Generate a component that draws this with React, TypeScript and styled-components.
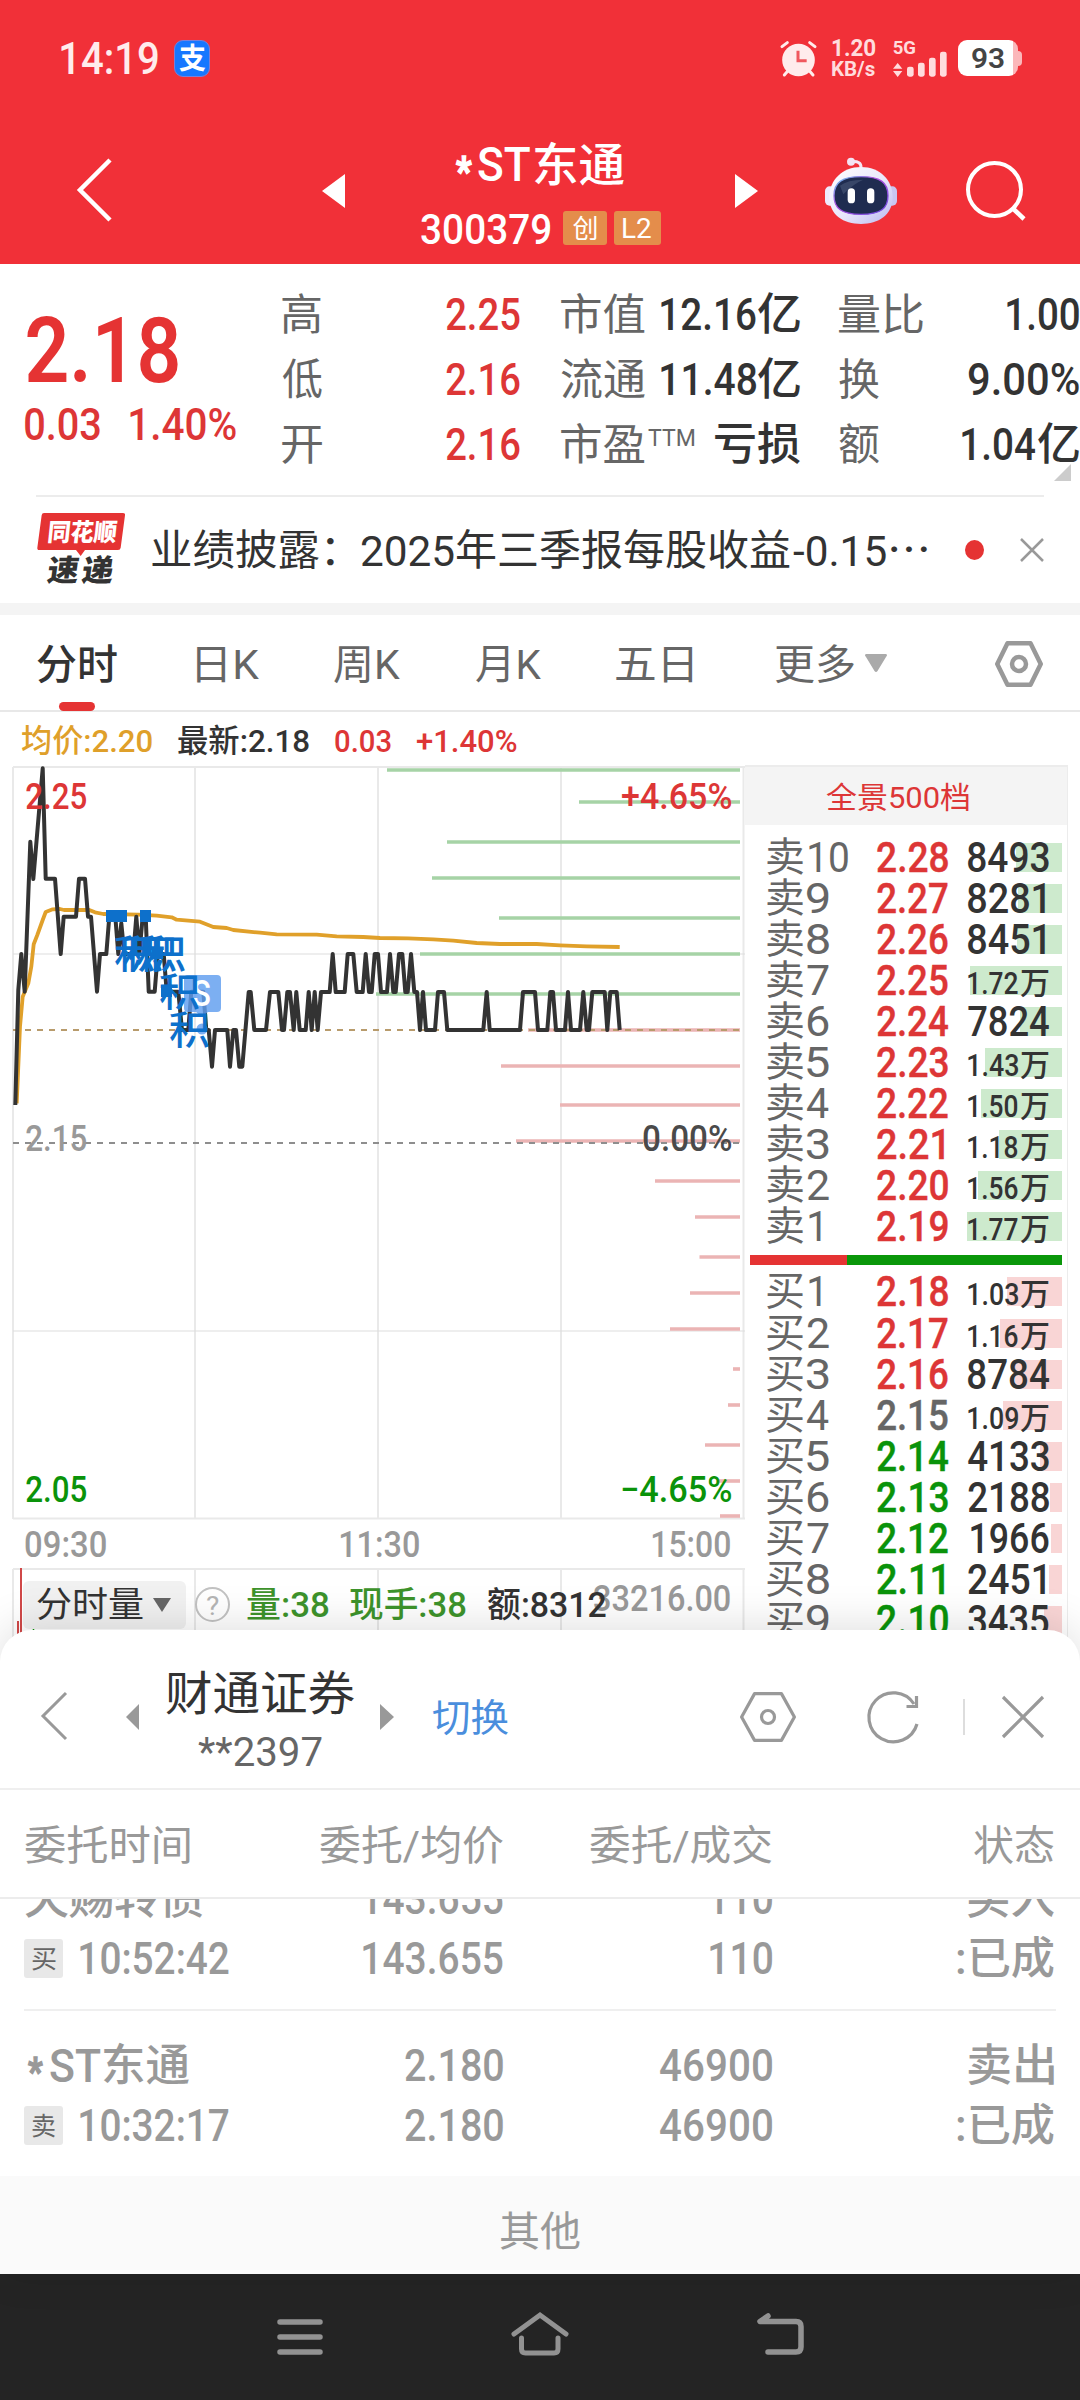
import React, { useLayoutEffect, useRef, useState } from 'react';
import styled, { createGlobalStyle } from 'styled-components';

const FONT = 'Roboto, "Noto Sans CJK SC", sans-serif';
const RED = '#dd3636';
const GREEN = '#0a930a';
const INK = '#333333';
const GREY = '#999999';

const Global = createGlobalStyle`
  body { margin: 0; background: #fff; font-family: ${FONT}; }
  * { box-sizing: border-box; }
`;

/* ---------- text fitted to an exact ink width ---------- */
const FitBox = styled.span<{ $w: number; $h: number; $ml: number }>`
  display: block;
  flex: none;
  width: ${p => p.$w}px;
  height: ${p => p.$h}px;
  margin-left: ${p => p.$ml}px;
  white-space: pre;
`;
const FitInner = styled.span<{ $s: number; $h: number; $c: string; $wt: number; $st: number }>`
  display: inline-block;
  transform-origin: 0 50%;
  font-size: ${p => p.$s}px;
  line-height: ${p => p.$h}px;
  font-weight: ${p => p.$wt};
  color: ${p => p.$c};
  -webkit-text-stroke: ${p => p.$st}px ${p => p.$c};
`;
interface TProps { w: number; s: number; h?: number; c?: string; wt?: number; ml?: number; dy?: number; stroke?: number; children: string }
function T({ w, s, h = 60, c = INK, wt = 400, ml = 0, dy = 1, stroke = 0, children }: TProps) {
  const ref = useRef<HTMLSpanElement>(null);
  const [tf, setTf] = useState('none');
  useLayoutEffect(() => {
    const ctx = document.createElement('canvas').getContext('2d');
    if (!ctx) return;
    ctx.font = `${wt} ${s}px ${FONT}`;
    const m = ctx.measureText(children);
    const ink = m.actualBoundingBoxLeft + m.actualBoundingBoxRight;
    const k = w / ink;
    setTf(`translate(${m.actualBoundingBoxLeft * k}px, ${dy}px) scaleX(${k})`);
  }, [children, w, s, wt, dy]);
  return (
    <FitBox $w={w} $h={h} $ml={ml}>
      <FitInner ref={ref} $s={s} $h={h} $c={c} $wt={wt} $st={stroke} style={{ transform: tf }}>{children}</FitInner>
    </FitBox>
  );
}

const Screen = styled.div`width: 1080px; height: 2400px; overflow: hidden; background: #fff; display: flex; flex-direction: column;`;
const Row = styled.div<{ $h?: number; $pl?: number }>`
  display: flex; align-items: center; flex: none;
  height: ${p => (p.$h ? p.$h + 'px' : 'auto')};
  padding-left: ${p => p.$pl ?? 0}px;
`;
const Icon = styled.svg<{ $ml?: number }>`display: block; flex: none; margin-left: ${p => p.$ml ?? 0}px; overflow: visible;`;
const Overlay = styled.div<{ $x: number; $y: number }>`position: absolute; left: ${p => p.$x}px; top: ${p => p.$y}px; display: flex;`;

/* ---------- header ---------- */
const Header = styled.header`flex: none; height: 264px; background: #f13038;`;
const StatusBar = styled(Row)`height: 116px; padding-left: 61px;`;
const PayIcon = styled.div`
  flex: none; width: 36px; height: 37px; margin-left: 16px; border-radius: 9px; background: #1677ff;
  border: 1px solid #7a80d8; display: flex; align-items: center; justify-content: center;
`;
const SpeedCol = styled.div`margin-left: 15px; width: 46px; flex: none;`;
const Battery = styled.div`
  flex: none; margin-left: 10px; width: 60px; height: 36px; border-radius: 9px; display: flex; justify-content: center;
  background: linear-gradient(90deg, #fff 91%, #fbb7ba 91%);
`;
const Nub = styled.div`width: 4px; height: 15px; border-radius: 0 4px 4px 0; background: #fbb7ba;`;
const NavBar = styled(Row)`height: 148px; padding-left: 76px;`;
const TitleBlock = styled.div`
  width: 390px; height: 128px; margin-top: 19px; display: flex; flex-direction: column; align-items: center; align-self: flex-start;
`;
const Tag = styled.div<{ $w: number; $ml: number }>`
  width: ${p => p.$w}px; height: 34px; margin-left: ${p => p.$ml}px; border-radius: 3px; background: #e48d4b;
  display: flex; justify-content: center;
`;

function Robot() {
  return (
    <Icon $ml={67} width="72" height="69" viewBox="195 373 216 207">
      <defs>
        <linearGradient id="shell" x1="0" y1="0" x2="1" y2="1">
          <stop offset="0" stopColor="#ffffff" /><stop offset=".55" stopColor="#e9e6fb" /><stop offset="1" stopColor="#b9b8ef" />
        </linearGradient>
        <linearGradient id="rim" x1="0" y1="0" x2="1" y2="1">
          <stop offset="0" stopColor="#5fc4e8" /><stop offset=".4" stopColor="#b050e0" /><stop offset="1" stopColor="#6a4be0" />
        </linearGradient>
      </defs>
      <path d="M303 408 Q304 388 276 390" fill="none" stroke="#f5e6f4" strokeWidth="9" />
      <circle cx="273" cy="390" r="12" fill="#f3e3f3" />
      <rect x="195" y="464" width="30" height="58" rx="14" fill="#eeeafc" />
      <rect x="381" y="464" width="30" height="58" rx="14" fill="#c9c6f2" />
      <path d="M303 406 C360 406 398 445 398 497 C398 550 355 577 303 577 C250 577 208 550 208 497 C208 445 247 406 303 406Z" fill="url(#shell)" />
      <path d="M303 435 C360 435 384 452 384 492 C384 530 362 548 303 548 C245 548 222 530 222 492 C222 452 247 435 303 435Z" fill="#1f2c50" stroke="url(#rim)" strokeWidth="4" />
      <path d="M240 462 Q262 444 310 444 Q280 456 250 488Z" fill="#4a5878" opacity=".6" />
      <rect x="263" y="470" width="22" height="45" rx="11" fill="#fff" />
      <rect x="321" y="470" width="22" height="45" rx="11" fill="#fff" />
    </Icon>
  );
}

function TopHeader() {
  return (
    <Header>
      <StatusBar>
        <T w={97} s={44} wt={500} c="#ffecec" dy={0.5}>14:19</T>
        <PayIcon><T w={27} s={29} h={34} wt={700} c="#fff">支</T></PayIcon>
        <Icon $ml={570} width="37" height="37" viewBox="60 28 111 111">
          <g stroke="#ffecec" strokeWidth="9" strokeLinecap="round">
            <path d="M66 48 82 36M165 48 149 36M84 120 73 133M148 120 159 133" />
          </g>
          <circle cx="115.500" cy="88" r="49" fill="#ffecec" />
          <path d="M114 60V90H140" fill="none" stroke="#f0585e" strokeWidth="9" />
        </Icon>
        <SpeedCol>
          <T w={44} s={23} h={21} wt={700} c="#ffdcdd">1.20</T>
          <T w={43} s={20} h={21} wt={700} c="#ffdcdd">KB/s</T>
        </SpeedCol>
        <Icon $ml={14} width="56" height="37" viewBox="396 28 168 111">
          <path d="M399 114 413 97 427 114ZM399 121 413 139 427 121Z" fill="#ffdcdd" />
          <rect x="441" y="108" width="20" height="30" rx="7" fill="#ffdcdd" />
          <rect x="474" y="96" width="20" height="42" rx="7" fill="#ffdcdd" />
          <rect x="507" y="81" width="20" height="57" rx="7" fill="#ffdcdd" />
          <rect x="540" y="63" width="20" height="75" rx="7" fill="#ffdcdd" />
          <text x="398" y="71" fontSize="54" fontWeight="700" fill="#ffdcdd" textLength="70" lengthAdjust="spacingAndGlyphs" fontFamily={FONT}>5G</text>
        </Icon>
        <Battery><T w={32} s={28} h={36} wt={600} c="#444">93</T></Battery>
        <Nub />
      </StatusBar>
      <NavBar>
        <Icon width="36" height="64" viewBox="0 0 36 64"><path d="M34 2 4 32 34 62" fill="none" stroke="#fff" strokeWidth="4.500" /></Icon>
        <Icon $ml={210} width="23" height="34" viewBox="0 -1 23 34"><path d="M23 0V34L0 17Z" fill="#fff" /></Icon>
        <TitleBlock>
          <Row>
            <T w={16} s={40} wt={800} c="#fff" dy={7} stroke={1.6}>*</T>
            <T w={52} s={49} wt={500} c="#fff" ml={6} dy={0}>ST</T>
            <T w={90} s={46} wt={500} c="#fff" ml={4} dy={0}>东通</T>
          </Row>
          <Row $h={66}>
            <T w={129} s={43} wt={500} c="#fff" ml={1}>300379</T>
            <Tag $w={44} $ml={13}><T w={24} s={26} h={34} c="#fff">创</T></Tag>
            <Tag $w={47} $ml={7}><T w={28} s={28} h={34} c="#fff">L2</T></Tag>
          </Row>
        </TitleBlock>
        <Icon width="23" height="34" viewBox="0 -1 23 34"><path d="M0 0V34L23 17Z" fill="#fff" /></Icon>
        <Robot />
        <Icon $ml={69} width="60" height="62" viewBox="0 0 60 62">
          <circle cx="28.500" cy="30.500" r="26.500" fill="none" stroke="#fff" strokeWidth="4" />
          <path d="M47.500 50 58 60" stroke="#fff" strokeWidth="4.500" />
        </Icon>
      </NavBar>
    </Header>
  );
}

/* ---------- quote ---------- */
const Quote = styled.section`position: relative; flex: none; height: 231px; display: flex;`;
const PriceBlock = styled.div`width: 282px; padding: 48px 0 0 25px;`;
const StatCol = styled.div<{ $w: number; $ml: number }>`
  flex: none; width: ${p => p.$w}px; margin-left: ${p => p.$ml}px; padding-top: 18px;
`;
const StatRow = styled.div`height: 65px; display: flex; justify-content: space-between;`;
const Pair = styled.div`display: flex;`;
const Fold = styled.div`
  position: absolute; right: 9px; top: 200px; border-left: 17px solid transparent; border-bottom: 17px solid #ccc;
`;
const LBL = '#666';

function QuotePanel() {
  return (
    <Quote>
      <PriceBlock>
        <T w={151} s={91} h={76} wt={600} c="#e53333" ml={2}>2.18</T>
        <Row $h={72}>
          <T w={75} s={44} h={72} wt={500} c={RED}>0.03</T>
          <T w={106} s={44} h={72} wt={500} c={RED} ml={30}>1.40%</T>
        </Row>
      </PriceBlock>
      <StatCol $w={238} $ml={0}>
        <StatRow><T w={39} s={43} h={65} c={LBL}>高</T><T w={74} s={44} h={65} wt={500} c={RED}>2.25</T></StatRow>
        <StatRow><T w={40} s={43} h={65} c={LBL}>低</T><T w={74} s={44} h={65} wt={500} c={RED}>2.16</T></StatRow>
        <StatRow><T w={40} s={43} h={65} c={LBL}>开</T><T w={74} s={44} h={65} wt={500} c={RED}>2.16</T></StatRow>
      </StatCol>
      <StatCol $w={239} $ml={41}>
        <StatRow><T w={84} s={43} h={65} c={LBL}>市值</T><Pair><T w={95} s={44} h={65} wt={500}>12.16</T><T w={42} s={44} h={65} wt={500} ml={2}>亿</T></Pair></StatRow>
        <StatRow><T w={84} s={43} h={65} c={LBL}>流通</T><Pair><T w={95} s={44} h={65} wt={500}>11.48</T><T w={42} s={44} h={65} wt={500} ml={2}>亿</T></Pair></StatRow>
        <StatRow>
          <Pair><T w={84} s={43} h={65} c={LBL}>市盈</T><T w={46} s={24} h={65} c={LBL} ml={3} dy={-6}>TTM</T></Pair>
          <T w={85} s={44} h={65} wt={500}>亏损</T>
        </StatRow>
      </StatCol>
      <StatCol $w={240} $ml={39}>
        <StatRow><T w={84} s={43} h={65} c={LBL}>量比</T><T w={72} s={44} h={65} wt={500}>1.00</T></StatRow>
        <StatRow><T w={40} s={43} h={65} c={LBL}>换</T><T w={110} s={44} h={65} wt={500}>9.00%</T></StatRow>
        <StatRow><T w={40} s={43} h={65} c={LBL}>额</T><Pair><T w={73} s={44} h={65} wt={500}>1.04</T><T w={41} s={44} h={65} wt={500} ml={3}>亿</T></Pair></StatRow>
      </StatCol>
      <Fold />
    </Quote>
  );
}

/* ---------- news strip ---------- */
const News = styled.section`flex: none; height: 108px; margin: 0 36px; border-top: 2px solid #ececec; display: flex; align-items: center;`;
const Dot = styled.i`flex: none; width: 19px; height: 20px; border-radius: 50%; background: #e53333; margin-left: 38px;`;
const Band = styled.div`flex: none; height: 12px; background: #f4f4f4;`;

function NewsStrip() {
  return (
    <News>
      <Icon $ml={1} width="88" height="72" viewBox="51 42 264 216">
        <path d="M72 39H309Q316 39 315 46L302 143Q301 150 294 150H195L182 168 168 150H58Q51 150 52 143L65 46Q66 39 72 39Z" fill="#e53333" />
        <g fontFamily={FONT} fontWeight="900">
          <text transform="translate(80 123) skewX(-6)" fontSize="74" fill="#fff" textLength="208" lengthAdjust="spacingAndGlyphs">同花顺</text>
          <text transform="translate(79 244) skewX(-8)" fontSize="90" fill="#333" textLength="94" lengthAdjust="spacingAndGlyphs">速</text>
          <text transform="translate(182 244) skewX(-8)" fontSize="90" fill="#333" textLength="94" lengthAdjust="spacingAndGlyphs">递</text>
        </g>
      </Icon>
      <T w={182} s={42} ml={27}>业绩披露：</T>
      <T w={93} s={43} ml={27}>2025</T>
      <T w={333} s={42} ml={3}>年三季报每股收益</T>
      <T w={93} s={43} ml={3}>-0.15</T>
      <T w={36} s={42} ml={5}>⋯</T>
      <Dot />
      <Icon $ml={36} width="24" height="24" viewBox="0 0 24 24"><path d="M1 1 23 23M23 1 1 23" stroke="#999" strokeWidth="2.500" /></Icon>
    </News>
  );
}

/* ---------- tabs ---------- */
const Tabs = styled.nav`
  flex: none; height: 97px; border-bottom: 2px solid #e8e8e8; display: flex; align-items: center; padding: 3px 0 0 37px;
`;
const ActiveTab = styled.div`
  align-self: stretch; display: flex; flex-direction: column; align-items: center; justify-content: space-between; padding-top: 16px; width: 80px;
`;
const Underline = styled.i`width: 36px; height: 9px; border-radius: 5px; background: #e53333; margin-bottom: -1px;`;

function Hex({ ml, w, h, sw, r }: { ml: number; w: number; h: number; sw: number; r: number }) {
  const a = sw / 2;
  return (
    <Icon $ml={ml} width={w} height={h} viewBox={`0 0 ${w} ${h}`}>
      <path d={`M${a} ${h / 2} ${w * 0.26} ${a}H${w * 0.74}L${w - a} ${h / 2} ${w * 0.74} ${h - a}H${w * 0.26}Z`} fill="none" stroke="#999" strokeWidth={sw} strokeLinejoin="round" />
      <circle cx={w / 2} cy={h / 2} r={r} fill="none" stroke="#999" strokeWidth={sw} />
    </Icon>
  );
}

function TabBar() {
  return (
    <Tabs>
      <ActiveTab><T w={80} s={41} h={60} wt={500}>分时</T><Underline /></ActiveTab>
      <T w={62} s={41} c={LBL} ml={80}>日K</T>
      <T w={66} s={41} c={LBL} ml={75}>周K</T>
      <T w={65} s={41} c={LBL} ml={76}>月K</T>
      <T w={77} s={41} c={LBL} ml={75}>五日</T>
      <T w={79} s={41} c={LBL} ml={82}>更多</T>
      <Icon $ml={11} width="22" height="18" viewBox="0 1 22 18"><path d="M1 0H21Q23 1 21 3L12.500 17Q11 19 9.500 17L1 3Q-1 1 1 0Z" fill="#aaa" /></Icon>
      <Hex ml={108} w={48} h={46} sw={4.5} r={7} />
    </Tabs>
  );
}

/* ---------- chart ---------- */
const Info = styled(Row)`height: 53px; padding-left: 22px;`;
const Main = styled.section`flex: none; height: 895px; display: flex; overflow: hidden;`;
const ChartCol = styled.div`width: 745px; flex: none;`;
const PriceChart = styled.div`position: relative; height: 754px;`;
const TimeAxis = styled.div`height: 49px; display: flex; justify-content: space-between; padding: 0 15px 0 25px;`;
const VolumeChart = styled.div`position: relative; height: 92px;`;
const VolumeInfo = styled(Row)`position: relative; height: 73px; padding-left: 23px;`;
const Picker = styled.div`flex: none; width: 163px; height: 48px; border-radius: 6px; background: #f1f1f1; display: flex; align-items: center; padding-left: 14px;`;
const Help = styled.div`
  flex: none; width: 35px; height: 35px; margin-left: 9px; border: 2px solid #c2c2c2; border-radius: 50%; display: flex; justify-content: center;
`;

const PRICE_A: number[][] = [[46,1065],[55,720],[64,612],[74,725],[91,275],[100,387],[128,55],[137,386],[165,386],[182,612],[191,500],[228,500],[237,386],[255,386],[264,500],[273,500],[291,725],[300,612],[319,612],[328,500],[346,500],[355,612],[364,520],[373,612],[400,612],[409,500],[418,612],[428,500],[437,500],[446,725],[464,725],[473,612],[491,612],[500,725],[535,725],[546,840],[565,840],[574,725],[610,725],[619,840],[626,840],[636,950],[645,840],[682,840],[690,950],[700,840],[708,840],[718,950],[727,950],[746,726],[752,726],[763,840],[798,840],[810,726],[835,726],[846,840],[852,840],[862,726],[870,726],[881,840],[889,726],[899,840],[917,840],[926,726],[935,840],[944,726],[953,840],[963,726],[989,726],[998,612],[1007,726],[1034,726],[1043,612],[1060,612],[1070,726],[1088,726],[1097,612],[1107,726],[1115,726]];
const PRICE_B: number[][] = [[14,612],[24,612],[33,726],[51,726],[60,612],[70,726],[77,726],[87,612],[97,612],[106,726],[113,726],[123,612],[133,726],[141,726],[150,840],[159,726],[168,840],[195,840],[204,726],[222,726],[232,840],[340,840],[350,726],[359,840],[450,840],[459,726],[495,726],[504,840],[532,840],[541,726],[549,726],[558,840],[585,840],[594,726],[603,840],[630,840],[640,726],[650,840],[657,840],[667,726],[704,726],[712,840],[721,726],[740,726],[749,840]];
const AVG_A: number[][] = [[50,1060],[60,830],[68,740],[85,700],[94,650],[101,583],[112,555],[128,510],[137,486],[158,478],[180,477],[192,480],[268,480],[285,487],[310,492],[415,494],[470,497],[515,502],[530,509],[600,515],[640,531],[680,534],[700,540],[780,548],[830,553],[950,554],[1010,559],[1090,561],[1140,564]];
const AVG_B: number[][] = [[115,565],[190,568],[250,572],[320,579],[390,582],[500,582],[570,586],[650,589],[749,591]];
const toPoints = (a: number[][], b: number[][]) =>
  [...a.map(([x, y]) => [x / 3, y / 3 - 15]), ...b.map(([x, y]) => [x / 3 + 370, y / 3 - 15])]
    .map(([x, y]) => `${x.toFixed(1)},${y.toFixed(1)}`).join(' ');

const ASK_DEPTH = [[387, 770], [579, 802], [447, 842], [432, 878], [499, 918], [420, 954], [376, 994]];
const BID_DEPTH = [[528, 1030], [501, 1066], [560, 1105], [516, 1141], [655, 1181], [695, 1217], [699.5, 1257], [690, 1293], [670, 1329], [733, 1369], [728, 1405], [705, 1445], [719, 1481], [720, 1516]];
const GLYPHS = [[115, 935], [123, 935], [137, 935], [146, 935], [160, 973], [169.500, 1011]];

function Chart() {
  return (
    <ChartCol>
      <PriceChart>
        <Icon width="745" height="754" viewBox="0 0 745 754">
          <g stroke="#e9e9e9" strokeWidth="2" fill="none">
            <path d="M13 2H745M13 2V754M743.500 2V754M195 2V754M378 2V754M561 2V754M13 753.500H745" />
            <path d="M13 189H745M13 566H745" stroke="#dedede" strokeWidth="1.200" />
          </g>
          <g stroke="#a6d3a6" strokeWidth="3.600">{ASK_DEPTH.map(([x, y]) => <path key={y} d={`M${x} ${y - 765}H740`} />)}</g>
          <g stroke="#ebb4b4" strokeWidth="3.600">{BID_DEPTH.map(([x, y]) => <path key={y} d={`M${x} ${y - 765}H740`} />)}</g>
          <path d="M13 265H740" stroke="#b89b6c" strokeWidth="2" strokeDasharray="6 6" />
          <path d="M13 378H740" stroke="#8e8e8e" strokeWidth="2" strokeDasharray="6 6" />
          <polyline points={toPoints(AVG_A, AVG_B)} fill="none" stroke="#e0a02a" strokeWidth="3.800" strokeLinejoin="round" />
          <polyline points={toPoints(PRICE_A, PRICE_B)} fill="none" stroke="#333" strokeWidth="4" strokeLinejoin="round" />
          <g fill="#0d70cb">
            <rect x="106" y="145" width="21" height="12" /><rect x="140" y="145" width="11" height="12" />
            <rect x="152" y="182" width="11" height="12" /><rect x="161" y="220" width="11" height="12" />
          </g>
          <g fill="#5f9def" fillOpacity=".82">
            <path d="M188 210H217Q221 210 221 214V243Q221 247 217 247H208L202 252 196 247H188Q184 247 184 243V214Q184 210 188 210Z" />
            <circle cx="202" cy="264" r="5.500" />
          </g>
        </Icon>
        <Overlay $x={193} $y={209}><T w={17} s={36} h={38} wt={500} c="#fff">S</T></Overlay>
        {GLYPHS.map(([x, y]) => (
          <Overlay key={`${x}`} $x={x} $y={y - 765}><T w={39} s={39} h={39} wt={500} c="#0d70cb">积</T></Overlay>
        ))}
        <Overlay $x={26} $y={12}><T w={60} s={36} h={40} wt={500} c={RED} dy={0}>2.25</T></Overlay>
        <Overlay $x={622} $y={12}><T w={109} s={36} h={40} wt={500} c={RED} dy={0}>+4.65%</T></Overlay>
        <Overlay $x={26} $y={354}><T w={60} s={36} h={40} wt={500} c={GREY} dy={0}>2.15</T></Overlay>
        <Overlay $x={643} $y={354}><T w={88} s={36} h={40} wt={500} c="#4a4a4a" dy={0}>0.00%</T></Overlay>
        <Overlay $x={26} $y={705}><T w={60} s={36} h={40} wt={500} c={GREEN} dy={0}>2.05</T></Overlay>
        <Overlay $x={622} $y={705}><T w={109} s={36} h={40} wt={500} c={GREEN} dy={0}>−4.65%</T></Overlay>
      </PriceChart>
      <TimeAxis>
        <T w={81} s={36} h={50} wt={500} c={GREY}>09:30</T>
        <T w={79} s={36} h={50} wt={500} c={GREY}>11:30</T>
        <T w={78} s={36} h={50} wt={500} c={GREY}>15:00</T>
      </TimeAxis>
      <VolumeChart>
        <Overlay $x={0} $y={0}>
          <Icon width="745" height="92" viewBox="0 0 745 92">
            <path d="M13 1H745M13 1V92M743.500 1V92M195 1V92M378 1V92M561 1V92" stroke="#e9e9e9" strokeWidth="2" />
            <path d="M21 0V92M18 53V92" stroke="#d04848" strokeWidth="2" />
            <path d="M33.500 55V92" stroke={GREEN} strokeWidth="1.500" />
          </Icon>
        </Overlay>
        <Overlay $x={594} $y={6}><T w={136} s={36} h={50} wt={500} c={GREY} dy={0}>33216.00</T></Overlay>
        <VolumeInfo>
          <Picker>
            <T w={106} s={35} h={48}>分时量</T>
            <Icon $ml={10} width="18" height="14" viewBox="0 0 18 14"><path d="M0 0H18L9 14Z" fill="#666" /></Icon>
          </Picker>
          <Help><T w={13} s={26} h={32} c="#b5b5b5">?</T></Help>
          <T w={82} s={35} wt={500} c="#3d932b" ml={17}>量:38</T>
          <T w={116} s={35} wt={500} c="#3d932b" ml={21}>现手:38</T>
          <T w={118} s={35} wt={500} ml={22}>额:8312</T>
        </VolumeInfo>
      </VolumeChart>
    </ChartCol>
  );
}

/* ---------- order book ---------- */
const Book = styled.div`width: 323px; flex: none; border-right: 1.500px solid #ececec; position: relative;`;
const BookHead = styled.div`height: 60px; background: #f4f4f4; border-top: 2px solid #ececec; padding-left: 81px; margin-bottom: 10.500px;`;
const Level = styled.div`position: relative; height: 41.050px; display: flex; padding-left: 22px;`;
const LevelBar = styled.div<{ $w: number; $c: string }>`
  position: absolute; right: 5px; top: 7px; height: 29px; width: ${p => p.$w}px; background: ${p => p.$c};
`;
const Cell = styled.div<{ $x: number }>`position: absolute; left: ${p => p.$x}px; top: 0;`;
const Ratio = styled.div`height: 10px; width: 312px; margin: 9px 0 5.500px 5px; background: linear-gradient(90deg, #e53333 97px, #0a970a 97px);`;

const ASKS = [['10', '2.28', '8493'], ['9', '2.27', '8281'], ['8', '2.26', '8451'], ['7', '2.25', '1.72万'], ['6', '2.24', '7824'], ['5', '2.23', '1.43万'], ['4', '2.22', '1.50万'], ['3', '2.21', '1.18万'], ['2', '2.20', '1.56万'], ['1', '2.19', '1.77万']];
const BIDS = [['1', '2.18', '1.03万'], ['2', '2.17', '1.16万'], ['3', '2.16', '8784'], ['4', '2.15', '1.09万'], ['5', '2.14', '4133'], ['6', '2.13', '2188'], ['7', '2.12', '1966'], ['8', '2.11', '2451'], ['9', '2.10', '3435']];

function LevelRow({ side, d }: { side: string; d: string[] }) {
  const [n, price, vol] = d;
  const big = vol.endsWith('万');
  const amount = big ? parseFloat(vol) * 10000 : Number(vol);
  const p = parseFloat(price);
  const color = p > 2.15 ? RED : p < 2.15 ? GREEN : '#666';
  const narrow = price.endsWith('1') ? 67 : 71;
  const tail = vol.endsWith('1') ? 77 : vol.startsWith('19') ? 78 : 81;
  return (
    <Level>
      <LevelBar $w={amount * 0.00537} $c={side === '卖' ? '#cdeacd' : '#f9d5d5'} />
      <Cell $x={22}><T w={36} s={40} h={41} c={LBL}>{side}</T></Cell>
      <Cell $x={n.startsWith('1') ? 64 : 62}><T w={n === '10' ? 39 : n === '1' ? 12 : 22} s={43} h={41} c={LBL}>{n}</T></Cell>
      <Cell $x={132}><T w={narrow} s={42} h={41} wt={500} c={color} stroke={0.4}>{price}</T></Cell>
      <Cell $x={vol.startsWith('19') ? 226 : 223}>
        {big ? (
          <Pair><T w={50} s={31} h={41} wt={500} dy={4}>{vol.slice(0, 4)}</T><T w={29} s={31} h={41} ml={2} wt={500} dy={4}>万</T></Pair>
        ) : <T w={tail} s={42} h={41} wt={500}>{vol}</T>}
      </Cell>
    </Level>
  );
}

function OrderBook() {
  return (
    <Book>
      <BookHead><T w={143} s={30} h={60} c={RED}>全景500档</T></BookHead>
      {ASKS.map(d => <LevelRow key={d[0]} side="卖" d={d} />)}
      <Ratio />
      {BIDS.map(d => <LevelRow key={d[0]} side="买" d={d} />)}
    </Book>
  );
}

/* ---------- trading sheet ---------- */
const Sheet = styled.section`
  position: relative; flex: none; height: 644px; margin-top: -30px; background: #fff; border-radius: 32px 32px 0 0;
  box-shadow: 0 -4px 44px rgba(0,0,0,.13);
`;
const SheetHead = styled(Row)`height: 160px; padding: 15px 0 0 41px; border-bottom: 2px solid #efefef;`;
const Broker = styled.div`width: 241px; align-self: flex-start; margin-top: 18px; display: flex; flex-direction: column; align-items: center;`;
const VLine = styled.i`width: 2px; height: 36px; margin-left: 44px; background: #ddd;`;
const Grid = styled.div<{ $h: number }>`
  display: grid; grid-template-columns: 200px 278px 269px 282px; height: ${p => p.$h}px; padding-left: 25px; align-items: center;
  & > :not(:first-child) { justify-self: end; }
`;
const TableHead = styled.div`height: 109px; border-bottom: 2px solid #ececec;`;
const List = styled.div`height: 277px; overflow: hidden;`;
const Shift = styled.div`margin-top: -31px;`;
const Rule = styled.div`height: 2px; margin: 21px 24px 24px; background: #efefef;`;
const Badge = styled.div`flex: none; width: 39px; height: 39px; margin: 0 17px 0 -1px; border-radius: 3px; background: #e8e8e8; display: flex; justify-content: center;`;
const Other = styled.div`height: 98px; background: #fafafa; display: flex; justify-content: center; padding-top: 10px;`;
const NavKeys = styled.footer`flex: none; height: 126px; background: #242424; display: flex; padding-left: 277px; align-items: flex-start; padding-top: 38px;`;

function TradeSheet() {
  return (
    <Sheet>
      <SheetHead>
        <Icon width="26" height="48" viewBox="0 1 26 48"><path d="M25 1 2 24 25 47" fill="none" stroke="#999" strokeWidth="3" /></Icon>
        <Icon $ml={59} width="13" height="26" viewBox="0 0 13 26"><path d="M13 0V26L0 13Z" fill="#999" /></Icon>
        <Broker>
          <T w={188} s={47} h={59}>财通证券</T>
          <T w={124} s={41} h={58} c={LBL}>**2397</T>
        </Broker>
        <Icon width="14" height="26" viewBox="0 0 14 26"><path d="M0 0V26L14 13Z" fill="#999" /></Icon>
        <T w={75} s={38} c="#4a8edd" ml={39}>切换</T>
        <Hex ml={232} w={56} h={50} sw={3.2} r={6.5} />
        <Icon $ml={72} width="51" height="52" viewBox="0 0 51 52">
          <path d="M49 33A24.500 24.500 0 1 1 46 13" fill="none" stroke="#999" strokeWidth="3.200" />
          <path d="M48.500 5V15.500H38.500" fill="none" stroke="#999" strokeWidth="3.200" />
        </Icon>
        <VLine />
        <Icon $ml={37} width="42" height="40" viewBox="0 0 42 40"><path d="M1 0 41 40M41 0 1 40" stroke="#999" strokeWidth="3.200" /></Icon>
      </SheetHead>
      <TableHead>
        <Grid $h={110}>
          <T w={165} s={41} c={GREY}>委托时间</T>
          <T w={183} s={41} c={GREY}>委托/均价</T>
          <T w={182} s={41} c={GREY}>委托/成交</T>
          <T w={80} s={41} c={GREY}>状态</T>
        </Grid>
      </TableHead>
      <List>
        <Shift>
          <Grid $h={60}>
            <T w={177} s={44} wt={500} c={GREY}>天赐转债</T>
            <T w={140} s={44} wt={500} c={GREY}>143.655</T>
            <T w={62} s={44} wt={500} c={GREY}>110</T>
            <T w={86} s={44} wt={500} c={GREY}>买入</T>
          </Grid>
          <Grid $h={60}>
            <Row><Badge><T w={24} s={25} h={39} c={LBL}>买</T></Badge><T w={149} s={44} wt={500} c={GREY}>10:52:42</T></Row>
            <T w={140} s={44} wt={500} c={GREY}>143.655</T>
            <T w={62} s={44} wt={500} c={GREY}>110</T>
            <T w={97} s={44} wt={500} c={GREY}>:已成</T>
          </Grid>
          <Rule />
          <Grid $h={60}>
            <Row $pl={3}>
              <T w={15} s={38} wt={800} c={GREY} dy={7} stroke={1.4}>*</T>
              <T w={51} s={46} wt={500} c={GREY} ml={7}>ST</T>
              <T w={86} s={44} wt={500} c={GREY} ml={2}>东通</T>
            </Row>
            <T w={98} s={44} wt={500} c={GREY}>2.180</T>
            <T w={112} s={44} wt={500} c={GREY}>46900</T>
            <T w={86} s={44} wt={500} c={GREY}>卖出</T>
          </Grid>
          <Grid $h={60}>
            <Row><Badge><T w={23} s={25} h={39} c={LBL}>卖</T></Badge><T w={149} s={44} wt={500} c={GREY}>10:32:17</T></Row>
            <T w={98} s={44} wt={500} c={GREY}>2.180</T>
            <T w={112} s={44} wt={500} c={GREY}>46900</T>
            <T w={97} s={44} wt={500} c={GREY}>:已成</T>
          </Grid>
        </Shift>
      </List>
      <Other><T w={80} s={41} h={90} c={GREY}>其他</T></Other>
    </Sheet>
  );
}

export default function App() {
  return (
    <Screen>
      <Global />
      <TopHeader />
      <QuotePanel />
      <NewsStrip />
      <Band />
      <TabBar />
      <Info>
        <T w={130} s={32} h={53} wt={500} c="#dfa02a" dy={3}>均价:2.20</T>
        <T w={131} s={32} h={53} wt={500} ml={26} dy={3}>最新:2.18</T>
        <T w={56} s={32} h={53} wt={500} c={RED} ml={26} dy={3}>0.03</T>
        <T w={100} s={32} h={53} wt={500} c={RED} ml={26} dy={3}>+1.40%</T>
      </Info>
      <Main>
        <Chart />
        <OrderBook />
      </Main>
      <TradeSheet />
      <NavKeys>
        <Icon width="46" height="44" viewBox="0 -1 46 44"><path d="M3 9H43M3 24H43M3 39H43" stroke="#929292" strokeWidth="5.500" strokeLinecap="round" /></Icon>
        <Icon $ml={188} width="58" height="44" viewBox="0 0 58 44">
          <path d="M3 22 29 3 55 22" fill="none" stroke="#929292" strokeWidth="5" strokeLinecap="round" />
          <path d="M10.500 26V37Q10.500 41 14.500 41H43Q47 41 47 37V26" fill="none" stroke="#929292" strokeWidth="5" strokeLinecap="round" />
        </Icon>
        <Icon $ml={187} width="48" height="44" viewBox="0 0 48 44">
          <path d="M12 4 4 9.500H40Q45 9.500 45 14.500V35Q45 40 40 40H12" fill="none" stroke="#929292" strokeWidth="5.500" strokeLinecap="round" strokeLinejoin="round" />
        </Icon>
      </NavKeys>
    </Screen>
  );
}
